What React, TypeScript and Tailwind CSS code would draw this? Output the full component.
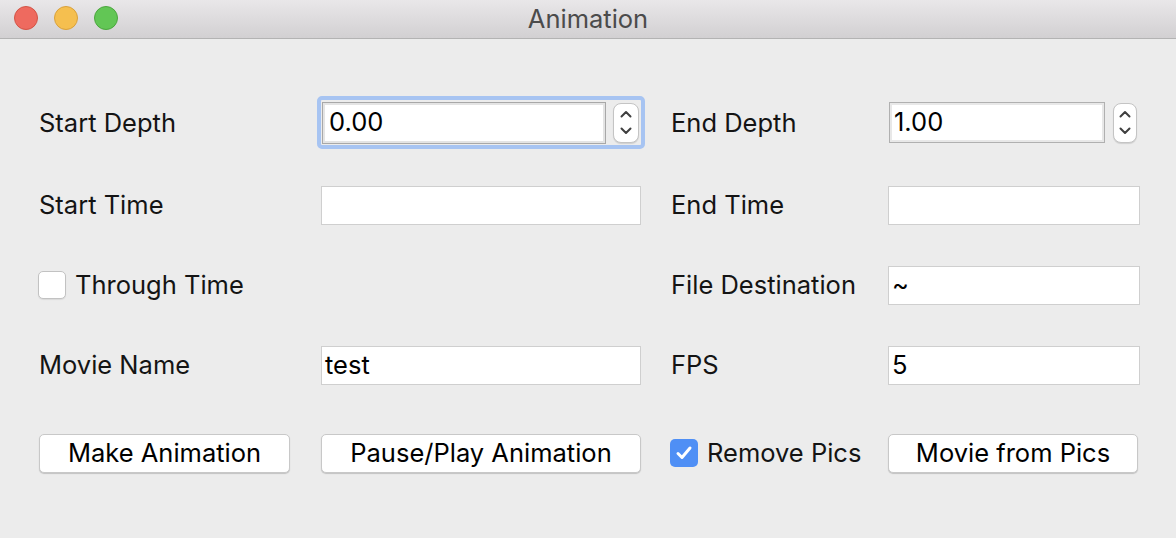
import React from 'react';

const Spinner = ({ className }: { className: string }) => (
  <div className={`flex flex-col items-center justify-center gap-[9px] rounded-[8px] border border-[#c4c4c4] bg-white shadow-[0_1px_1px_rgba(0,0,0,0.12)] ${className}`}>
    <svg width="12" height="8" viewBox="0 0 12 8">
      <path d="M1.5 6.5 L6 2 L10.5 6.5" fill="none" stroke="#3f3f3f" strokeWidth="2" strokeLinecap="round" strokeLinejoin="round" />
    </svg>
    <svg width="12" height="8" viewBox="0 0 12 8">
      <path d="M1.5 1.5 L6 6 L10.5 1.5" fill="none" stroke="#3f3f3f" strokeWidth="2" strokeLinecap="round" strokeLinejoin="round" />
    </svg>
  </div>
);

const Field = ({ value, pad = 'pl-[3px]' }: { value?: string; pad?: string }) => (
  <div className={`h-[39px] bg-white border border-[#cfcfcf] flex items-center text-[25.5px] text-black ${pad}`}>
    {value}
  </div>
);

const Label = ({ text }: { text: string }) => (
  <span className="text-[25.5px] text-[#141414] leading-none whitespace-nowrap">{text}</span>
);

const Button = ({ text }: { text: string }) => (
  <button className="h-[39px] w-full rounded-[5px] bg-white border border-[#c8c8c8] shadow-[0_1px_1px_rgba(0,0,0,0.18)] text-[25.5px] text-black leading-none whitespace-nowrap">
    {text}
  </button>
);

const CheckBox = ({ checked }: { checked?: boolean }) =>
  checked ? (
    <div className="w-[28px] h-[28px] rounded-[5px] bg-[#4f8ff5] flex items-center justify-center shrink-0">
      <svg width="18" height="16" viewBox="0 0 18 16">
        <path d="M3 8.5 L7 12.5 L15 3" fill="none" stroke="white" strokeWidth="3" strokeLinecap="round" strokeLinejoin="round" />
      </svg>
    </div>
  ) : (
    <div className="w-[28px] h-[28px] rounded-[5px] bg-white border border-[#c2c2c2] shadow-[0_1px_1px_rgba(0,0,0,0.08)] shrink-0" />
  );

const rowClass = 'grid grid-cols-[252px_320px_187px_252px] gap-x-[30px] items-center h-[40px]';

export default function App() {
  return (
    <div className="w-[1176px] h-[538px] bg-[#ececec] overflow-hidden font-['Inter','Liberation_Sans',sans-serif]">
      {/* title bar */}
      <div className="relative h-[39px] bg-gradient-to-b from-[#e9e7e9] to-[#d2d0d2] border-b border-[#b3b3b3] flex items-center justify-center">
        <div className="absolute left-[14px] top-[6px] flex gap-[16px]">
          <div className="w-[24px] h-[24px] rounded-full bg-[#ee6a5f] border border-[#d35446]" />
          <div className="w-[24px] h-[24px] rounded-full bg-[#f5bf4f] border border-[#d9a13b]" />
          <div className="w-[24px] h-[24px] rounded-full bg-[#62c655] border border-[#4ba63e]" />
        </div>
        <span className="text-[25.5px] text-[#4b4b4b]">Animation</span>
      </div>

      <div className="pl-[39px] pt-[63px]">
        {/* row 1 */}
        <div className={rowClass}>
          <Label text="Start Depth" />
          <div className="h-[53px] -mx-[4px] -my-[7px] rounded-[5px] border-[4px] border-[#a7c4f2] flex items-center pl-[1px] pr-[2px] gap-[7px]">
            <div className="flex-1 h-[42px] bg-white border border-[#a8a8a8] shadow-[inset_0_0_0_2px_#e4e4e4] flex items-center pl-[6px] text-[25.5px] text-black">
              0.00
            </div>
            <Spinner className="w-[26px] h-[40px]" />
          </div>
          <Label text="End Depth" />
          <div className="flex items-center gap-[8px] pl-[1px]">
            <div className="w-[216px] h-[41px] bg-white border border-[#b0b0b0] shadow-[inset_0_0_0_2px_#e8e8e8] flex items-center pl-[4px] text-[25.5px] text-black">
              1.00
            </div>
            <Spinner className="w-[24px] h-[40px]" />
          </div>
        </div>

        {/* row 2 */}
        <div className={`${rowClass} mt-[43px]`}>
          <Label text="Start Time" />
          <Field />
          <Label text="End Time" />
          <Field />
        </div>

        {/* row 3 */}
        <div className={`${rowClass} mt-[40px]`}>
          <div className="flex items-center gap-[9px] -ml-[1px]">
            <CheckBox />
            <Label text="Through Time" />
          </div>
          <div />
          <Label text="File Destination" />
          <Field value="~" />
        </div>

        {/* row 4 */}
        <div className={`${rowClass} mt-[40px]`}>
          <Label text="Movie Name" />
          <Field value="test" />
          <Label text="FPS" />
          <Field value="5" />
        </div>

        {/* row 5 */}
        <div className={`${rowClass} mt-[48px]`}>
          <div className="pr-[1px]">
            <Button text="Make Animation" />
          </div>
          <Button text="Pause/Play Animation" />
          <div className="flex items-center gap-[9px] -ml-[1px]">
            <CheckBox checked />
            <Label text="Remove Pics" />
          </div>
          <div className="pr-[2px]">
            <Button text="Movie from Pics" />
          </div>
        </div>
      </div>
    </div>
  );
}
